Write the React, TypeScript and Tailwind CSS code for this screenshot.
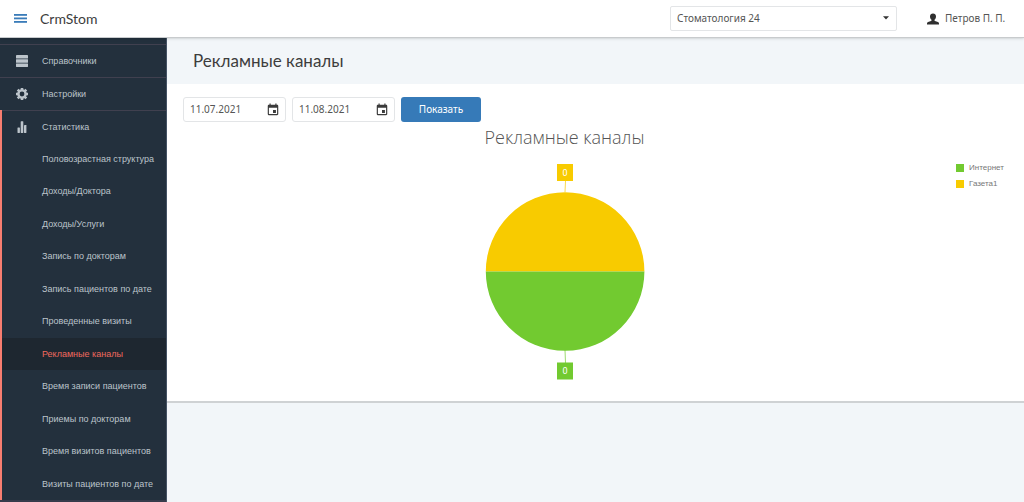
import React from "react";
import { MdEvent } from "react-icons/md";

const reports = [
  "Половозрастная структура",
  "Доходы/Доктора",
  "Доходы/Услуги",
  "Запись по докторам",
  "Запись пациентов по дате",
  "Проведенные визиты",
  "Рекламные каналы",
  "Время записи пациентов",
  "Приемы по докторам",
  "Время визитов пациентов",
  "Визиты пациентов по дате",
];

const activeReport = "Рекламные каналы";

const legend = [
  { label: "Интернет", color: "bg-[#72ca30]" },
  { label: "Газета1", color: "bg-[#f8cb00]" },
];

const MenuIcon = () => (
  <svg width="13" height="10" viewBox="0 0 13 10" fill="#3a7cb9">
    <rect y="0" width="13" height="1.8" />
    <rect y="3.5" width="13" height="1.8" />
    <rect y="7" width="13" height="1.8" />
  </svg>
);

const ServerIcon = () => (
  <svg width="12" height="12" viewBox="0 0 12 12" fill="currentColor">
    <rect y="0" width="12" height="3.6" rx="0.4" />
    <rect y="4.2" width="12" height="3.6" rx="0.4" />
    <rect y="8.4" width="12" height="3.6" rx="0.4" />
  </svg>
);

const GearIcon = () => (
  <svg width="12" height="12" viewBox="0 0 12 12" fill="none" stroke="currentColor">
    <circle cx="6" cy="6" r="3.6" strokeWidth="2.4" />
    <path
      d="M6 0v2M6 10v2M0 6h2M10 6h2M1.700 1.700l1.500 1.500M8.800 8.800l1.500 1.500M10.300 1.700L8.800 3.200M3.200 8.800l-1.500 1.500"
      strokeWidth="2.6"
    />
  </svg>
);

const BarsIcon = () => (
  <svg width="12" height="12" viewBox="0 0 12 12" fill="currentColor">
    <rect x="1.5" y="6.5" width="2.4" height="5.5" rx="0.4" />
    <rect x="4.700" y="0.3" width="2.6" height="11.7" rx="0.4" />
    <rect x="8" y="4" width="2.4" height="8" rx="0.4" />
  </svg>
);

const UserIcon = () => (
  <svg width="12" height="12" viewBox="0 0 12 12" fill="#2f2f2f">
    <path d="M6 .5C4.200.5 3 1.700 3 3.400c0 1.500.7 2.800 1.500 3.400v.7c0 .3-.2.500-.5.600L1.100 9.100C.4 9.400 0 9.800 0 10.500v1h12v-1c0-.7-.4-1.100-1.100-1.400L8 8.100c-.3-.1-.5-.3-.5-.6v-.7C8.300 6.200 9 4.900 9 3.400 9 1.700 7.800.5 6 .5z" />
  </svg>
);

const DateField = ({ label, value }: { label: string; value: string }) => (
  <label className="flex h-[25px] w-[103px] items-center rounded-[3px] border border-[#e3e5e7] bg-white pr-[5px] pl-[6px]">
    <input
      type="text"
      aria-label={label}
      defaultValue={value}
      className="min-w-0 flex-1 text-[10px] text-[#555] outline-none"
    />
    <MdEvent size={14} color="#3b3b3b" />
  </label>
);

const PieChart = () => (
  <svg width="160" height="216" viewBox="0 0 160 216" role="img" aria-label="Рекламные каналы">
    <path d="M80.500 17L80 28" stroke="#f8cb00" strokeOpacity="0.7" />
    <path d="M80 186L80.500 199" stroke="#72ca30" strokeOpacity="0.7" />
    <path d="M.8 107.500a79.300 79.300 0 0 1 158.600 0z" fill="#f8cb00" />
    <path d="M.8 107.500a79.300 79.300 0 0 0 158.600 0z" fill="#72ca30" />
    <rect x="72" y="0" width="16" height="17" fill="#f8cb00" />
    <rect x="72" y="198.500" width="16" height="17" fill="#72ca30" />
    <g fill="#fff" fontSize="9" textAnchor="middle" fontFamily="Roboto, sans-serif">
      <text x="80" y="12">0</text>
      <text x="80" y="210">0</text>
    </g>
  </svg>
);

const Sidebar = () => (
  <nav className="w-[167px] shrink-0 border-r border-[#455365] bg-[#23303d] pt-[6px] font-['Liberation_Sans',sans-serif] text-[9px] text-[#bcc4cb]">
    <a href="#" className="flex h-[33px] items-center border-t border-[#40404f] pl-4">
      <ServerIcon />
      <span className="pt-px pl-[14px]">Справочники</span>
    </a>
    <a href="#" className="flex h-[33px] items-center border-t border-[#40404f] pl-4">
      <GearIcon />
      <span className="pt-px pl-[14px]">Настройки</span>
    </a>
    <div className="border-l-2 border-[#f87d70]">
      <a href="#" className="flex h-[33px] items-center border-t border-[#40404f] pl-[14px]">
        <BarsIcon />
        <span className="pt-px pl-[14px]">Статистика</span>
      </a>
      <ul className="grid h-[357px] auto-rows-fr">
        {reports.map((item) => (
          <li key={item} className="flex">
            <a
              href="#"
              className={
                item === activeReport
                  ? "flex flex-1 items-center bg-[#1e2730] pt-px pl-10 text-[#f0695e]"
                  : "flex flex-1 items-center pt-px pl-10"
              }
            >
              {item}
            </a>
          </li>
        ))}
      </ul>
    </div>
    <div className="h-[2px] bg-[#363b4b]" />
  </nav>
);

export default function App() {
  return (
    <div className="flex min-h-screen flex-col bg-[#f2f6f9] font-['Noto_Sans',sans-serif] text-[#3d3d3d]">
      <header className="relative flex h-[38px] items-center border-b border-[#c8cbcd] bg-white pl-[14px] shadow-sm">
        <button type="button" aria-label="Меню">
          <MenuIcon />
        </button>
        <span className="pl-[13px] font-[Lato,sans-serif] text-[14px]">CrmStom</span>
        <div className="relative ml-auto w-[227px]">
          <select
            aria-label="Клиника"
            className="block h-[25px] w-full appearance-none rounded-[2px] border border-[#e3e5e7] bg-white pl-[6px] text-[10px] text-[#555]"
          >
            <option>Стоматология 24</option>
          </select>
          <svg className="pointer-events-none absolute top-[10px] right-[8px]" width="6" height="4" viewBox="0 0 6 4">
            <path d="M0 .3h6L3 3.500z" fill="#333" />
          </svg>
        </div>
        <a href="#" className="flex w-[127px] items-center gap-[6px] pl-[30px] text-[10px] whitespace-nowrap text-[#555]">
          <UserIcon />
          Петров П. П.
        </a>
      </header>
      <div className="flex flex-1">
        <Sidebar />
        <main className="min-w-0 flex-1">
          <h1 className="flex h-[46px] items-center pl-[26px] font-[Lato,sans-serif] text-[17px]">
            Рекламные каналы
          </h1>
          <section className="border-b-2 border-[#cfd2d4] bg-white pt-[13px] pr-5 pb-[21px] pl-4">
            <form className="flex gap-[6px]" onSubmit={(e) => e.preventDefault()}>
              <DateField label="Дата начала" value="11.07.2021" />
              <DateField label="Дата окончания" value="11.08.2021" />
              <button type="submit" className="h-[25px] w-20 rounded-[3px] bg-[#367ab8] text-[10px] text-white">
                Показать
              </button>
            </form>
            <div className="flex gap-[10px]">
              <div className="flex flex-1 flex-col items-center">
                <h2 className="mb-[11px] font-['Open_Sans',sans-serif] text-[18px] leading-[31px] font-light text-[#555]">
                  Рекламные каналы
                </h2>
                <PieChart />
              </div>
              <ul className="flex w-[48px] flex-col gap-1 pt-10 font-['Liberation_Sans',sans-serif] text-[8px] leading-3 text-[#777]">
                {legend.map((item) => (
                  <li key={item.label} className="flex items-center gap-[5px]">
                    <span className={`size-2 shrink-0 ${item.color}`} />
                    {item.label}
                  </li>
                ))}
              </ul>
            </div>
          </section>
        </main>
      </div>
    </div>
  );
}
